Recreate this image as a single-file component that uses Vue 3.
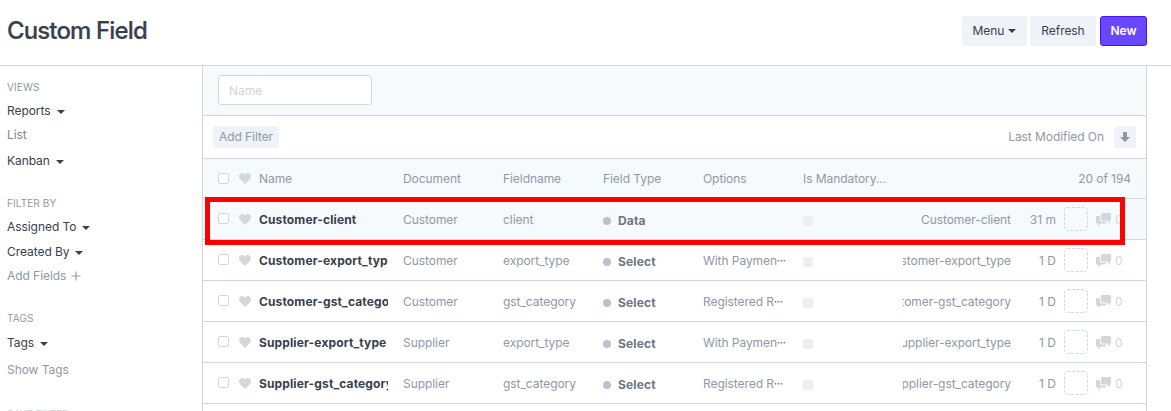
<script setup>
const columns = ['Document', 'Fieldname', 'Field Type', 'Options', 'Is Mandatory...']

const rows = [
  { name: 'Customer-client', doc: 'Customer', field: 'client', type: 'Data', option: '', age: '31 m' },
  { name: 'Customer-export_type', doc: 'Customer', field: 'export_type', type: 'Select', option: 'With Paymen', age: '1 D' },
  { name: 'Customer-gst_category', doc: 'Customer', field: 'gst_category', type: 'Select', option: 'Registered R', age: '1 D' },
  { name: 'Supplier-export_type', doc: 'Supplier', field: 'export_type', type: 'Select', option: 'With Paymen', age: '1 D' },
  { name: 'Supplier-gst_category', doc: 'Supplier', field: 'gst_category', type: 'Select', option: 'Registered R', age: '1 D' },
]
</script>

<template>
  <div class="page">
    <header class="top">
      <h1>Custom Field</h1>
      <div class="actions">
        <button class="btn menu">Menu <svg class="caret" viewBox="0 0 8 4"><path d="M0 0h8L4 4z" /></svg></button>
        <button class="btn refresh">Refresh</button>
        <button class="btn primary">New</button>
      </div>
    </header>
    <div class="body">
      <aside class="side">
        <section class="views">
          <h6>VIEWS</h6>
          <a class="dark">Reports <svg class="caret" viewBox="0 0 8 4"><path d="M0 0h8L4 4z" /></svg></a>
          <a class="plain">List</a>
          <a class="dark kanban">Kanban <svg class="caret" viewBox="0 0 8 4"><path d="M0 0h8L4 4z" /></svg></a>
        </section>
        <section class="filters">
          <h6>FILTER BY</h6>
          <a class="dark">Assigned To <svg class="caret" viewBox="0 0 8 4"><path d="M0 0h8L4 4z" /></svg></a>
          <a class="dark created">Created By <svg class="caret" viewBox="0 0 8 4"><path d="M0 0h8L4 4z" /></svg></a>
          <a class="muted">Add Fields <svg class="plus" viewBox="0 0 10 10"><path d="M5 0.500v9M0.500 5h9" /></svg></a>
        </section>
        <section class="tags">
          <h6>TAGS</h6>
          <a class="dark">Tags <svg class="caret" viewBox="0 0 8 4"><path d="M0 0h8L4 4z" /></svg></a>
          <a class="muted show">Show Tags</a>
        </section>
        <section>
          <h6 class="save">SAVE FILTER</h6>
        </section>
      </aside>
      <main class="panel">
        <div class="search"><input type="text" placeholder="Name" /></div>
        <div class="toolbar">
          <button class="add">Add Filter</button>
          <div class="sort">
            <span>Last Modified On</span>
            <button class="dir">
              <svg viewBox="0 0 10 10"><path d="M3 0h4v5h3L5 10 0 5h3z" /></svg>
            </button>
          </div>
        </div>
        <div class="row head">
          <i class="check"></i>
          <svg class="heart" viewBox="0 0 12 11"><path d="M6 11 1 6C-.6 4.200-.2 1.300 1.700.4 3.300-.3 5.100.3 6 1.900 6.900.3 8.700-.3 10.300.4 12.200 1.300 12.600 4.200 11 6z" /></svg>
          <span class="title">Name</span>
          <span v-for="c in columns" :key="c" class="col">{{ c }}</span>
          <span class="count">20 of 194</span>
        </div>
        <div v-for="(r, i) in rows" :key="r.name" class="row" :class="{ hover: i === 0 }">
          <i class="check"></i>
          <svg class="heart" viewBox="0 0 12 11"><path d="M6 11 1 6C-.6 4.200-.2 1.300 1.700.4 3.300-.3 5.100.3 6 1.900 6.900.3 8.700-.3 10.300.4 12.200 1.300 12.600 4.200 11 6z" /></svg>
          <b class="title">{{ r.name }}</b>
          <span class="col">{{ r.doc }}</span>
          <span class="col">{{ r.field }}</span>
          <span class="col type"><i class="dot"></i>{{ r.type }}</span>
          <span class="col option">{{ r.option }}<svg v-if="r.option" class="dots" viewBox="0 0 9 2"><path d="M0.500 0h1.700v1.500H.5zM3.500 0h1.700v1.500H3.500zM6.500 0h1.700v1.500H6.500z" /></svg></span>
          <span class="mandatory"><i></i></span>
          <span class="id"><span>{{ r.name }}</span></span>
          <span class="age">{{ r.age }}</span>
          <svg class="avatar" viewBox="0 0 24 24"><rect x="0.500" y="0.500" width="23" height="23" rx="3" /></svg>
          <svg class="chat" viewBox="0 0 15 13"><path d="M6 0h8q1 0 1 1v5.500q0 1-1 1v3L11 7.500H6q-1 0-1-1V1q0-1 1-1z" /><path d="M1 3h3v4q0 1.500 1.500 1.500H10v1q0 1-1 1H5L2 13v-2.500H1q-1 0-1-1V4q0-1 1-1z" /></svg>
          <span class="comments">0</span>
        </div>
        <div class="mark"></div>
      </main>
    </div>
  </div>
</template>

<style>
body { margin: 0; background: #fff; overflow: hidden; }
</style>

<style scoped>
* { box-sizing: border-box; }
.page {
  width: 1171px; height: 411px; overflow: hidden; display: flex; flex-direction: column;
  font: 12px/18px Inter, "Liberation Sans", sans-serif; color: #8d99a6; letter-spacing: -0.06px;
}
button, input { font: inherit; letter-spacing: inherit; margin: 0; }
svg { display: block; fill: currentColor; flex: none; }
.top {
  height: 66px; flex: none; border-bottom: 1px solid #d1d8dd; display: flex;
  justify-content: space-between; align-items: flex-start; padding: 16px 24px 0 7px;
}
h1 { margin: 0; font-size: 24px; line-height: 30px; font-weight: 500; color: #36414c; letter-spacing: -0.87px; -webkit-text-stroke: 0.2px #36414c; }
.actions { display: flex; }
.btn {
  height: 30px; border: 0; border-radius: 3px; background: #eff2f7; color: #36414c;
  display: flex; align-items: center; justify-content: center; padding: 0;
}
.menu { width: 65px; margin-right: 3px; gap: 4px; }
.refresh { width: 66px; margin-right: 4px; }
.primary { width: 47px; background: #6747ff; border: 1px solid #4d0cf5; color: #fff; font-weight: 600; }
.caret { width: 8px; height: 4px; margin-top: 1px; }
.menu .caret { margin-top: 0; }
.body { display: flex; height: 345px; }
.side { width: 202px; flex: none; padding: 11px 0 0 7px; overflow: hidden; }
section { display: flex; flex-direction: column; margin-bottom: 20px; }
h6 { margin: 0 0 2px; font-size: 10px; line-height: 20px; font-weight: 400; color: #8d99a6; letter-spacing: 0.12px; }
section a { display: flex; align-items: center; height: 24px; gap: 6px; }
.dark { color: #36414c; }
.plain { color: #888; }
.muted { color: #8d99a6; }
.kanban { margin-top: 2px; }
.created { margin-top: 1px; }
.tags h6 { margin-bottom: 3px; }
.show { margin-top: 3px; }
.save { color: #c8ced4; margin-top: 2px; }
.plus { width: 10px; height: 10px; stroke: currentColor; stroke-width: 1.1; margin-left: -1px; }
.panel { width: 945px; border: solid #d1d8dd; border-width: 0 1px; position: relative; }
.search { height: 50px; background: #f7fafc; border-bottom: 1px solid #d1d8dd; padding: 9px 15px; }
.search input {
  display: block; width: 154px; height: 30px; border: 1px solid #d1d8dd; border-radius: 3px;
  background: #fff; padding: 0 10px; outline: 0;
}
.search input::placeholder { color: #ced5db; opacity: 1; }
.toolbar {
  height: 43px; border-bottom: 1px solid #d1d8dd; display: flex; align-items: center;
  justify-content: space-between; padding: 0 10px;
}
.add, .dir { height: 22px; border: 0; border-radius: 3px; background: #eff2f7; color: #8d99a6; padding: 0; }
.add { width: 66px; }
.sort { display: flex; align-items: center; gap: 10px; }
.dir { width: 22px; display: flex; align-items: center; justify-content: center; }
.dir svg { width: 10px; height: 10px; }
.row {
  height: 41px; border-bottom: 1px solid #d1d8dd; display: flex; align-items: center;
  padding: 1px 0 0 15px; white-space: nowrap;
}
.head { height: 40px; padding-top: 0; }
.head, .hover { background: #f7fafc; }
.check { width: 11px; height: 11px; border: 1px solid #d1d8dd; border-radius: 2px; background: #fff; flex: none; }
.row:not(.head) .check { margin-bottom: 3px; }
.heart { width: 12px; height: 11px; color: #d1d8dd; margin: 0 8px 0 10px; }
.title { width: 129px; margin-right: 15px; overflow: hidden; flex: none; }
b.title { color: #36414c; font-weight: 700; letter-spacing: 0.13px; }
.col { width: 100px; flex: none; }
.type { display: flex; align-items: center; font-weight: 700; color: #6c7680; padding-top: 2px; letter-spacing: 0.15px; }
.dot { width: 8px; height: 8px; border-radius: 50%; background: #b8c2cf; margin-right: 7px; }
.option { display: flex; align-items: center; }
.dots { width: 9px; height: 2px; color: #7d8894; }
.count { margin-left: auto; padding-right: 15px; }
.mandatory { width: 100px; flex: none; padding-top: 2px; }
.mandatory i { display: block; width: 10px; height: 10px; border-radius: 2px; background: #eee; }
.id { width: 108px; overflow: hidden; display: flex; justify-content: flex-end; flex: none; }
.age { width: 45px; text-align: right; flex: none; letter-spacing: 0; }
.avatar { width: 24px; height: 24px; margin: -1px 0 0 8px; fill: none; stroke: #d1d8dd; stroke-dasharray: 3 1.500; }
.chat { width: 15px; height: 13px; margin: 0 4px 0 8px; color: #d1d8dd; }
.comments { color: #d1d8dd; }
.mark { position: absolute; left: 2px; top: 131px; width: 920px; height: 48px; border: 5px solid #f00; }
</style>
